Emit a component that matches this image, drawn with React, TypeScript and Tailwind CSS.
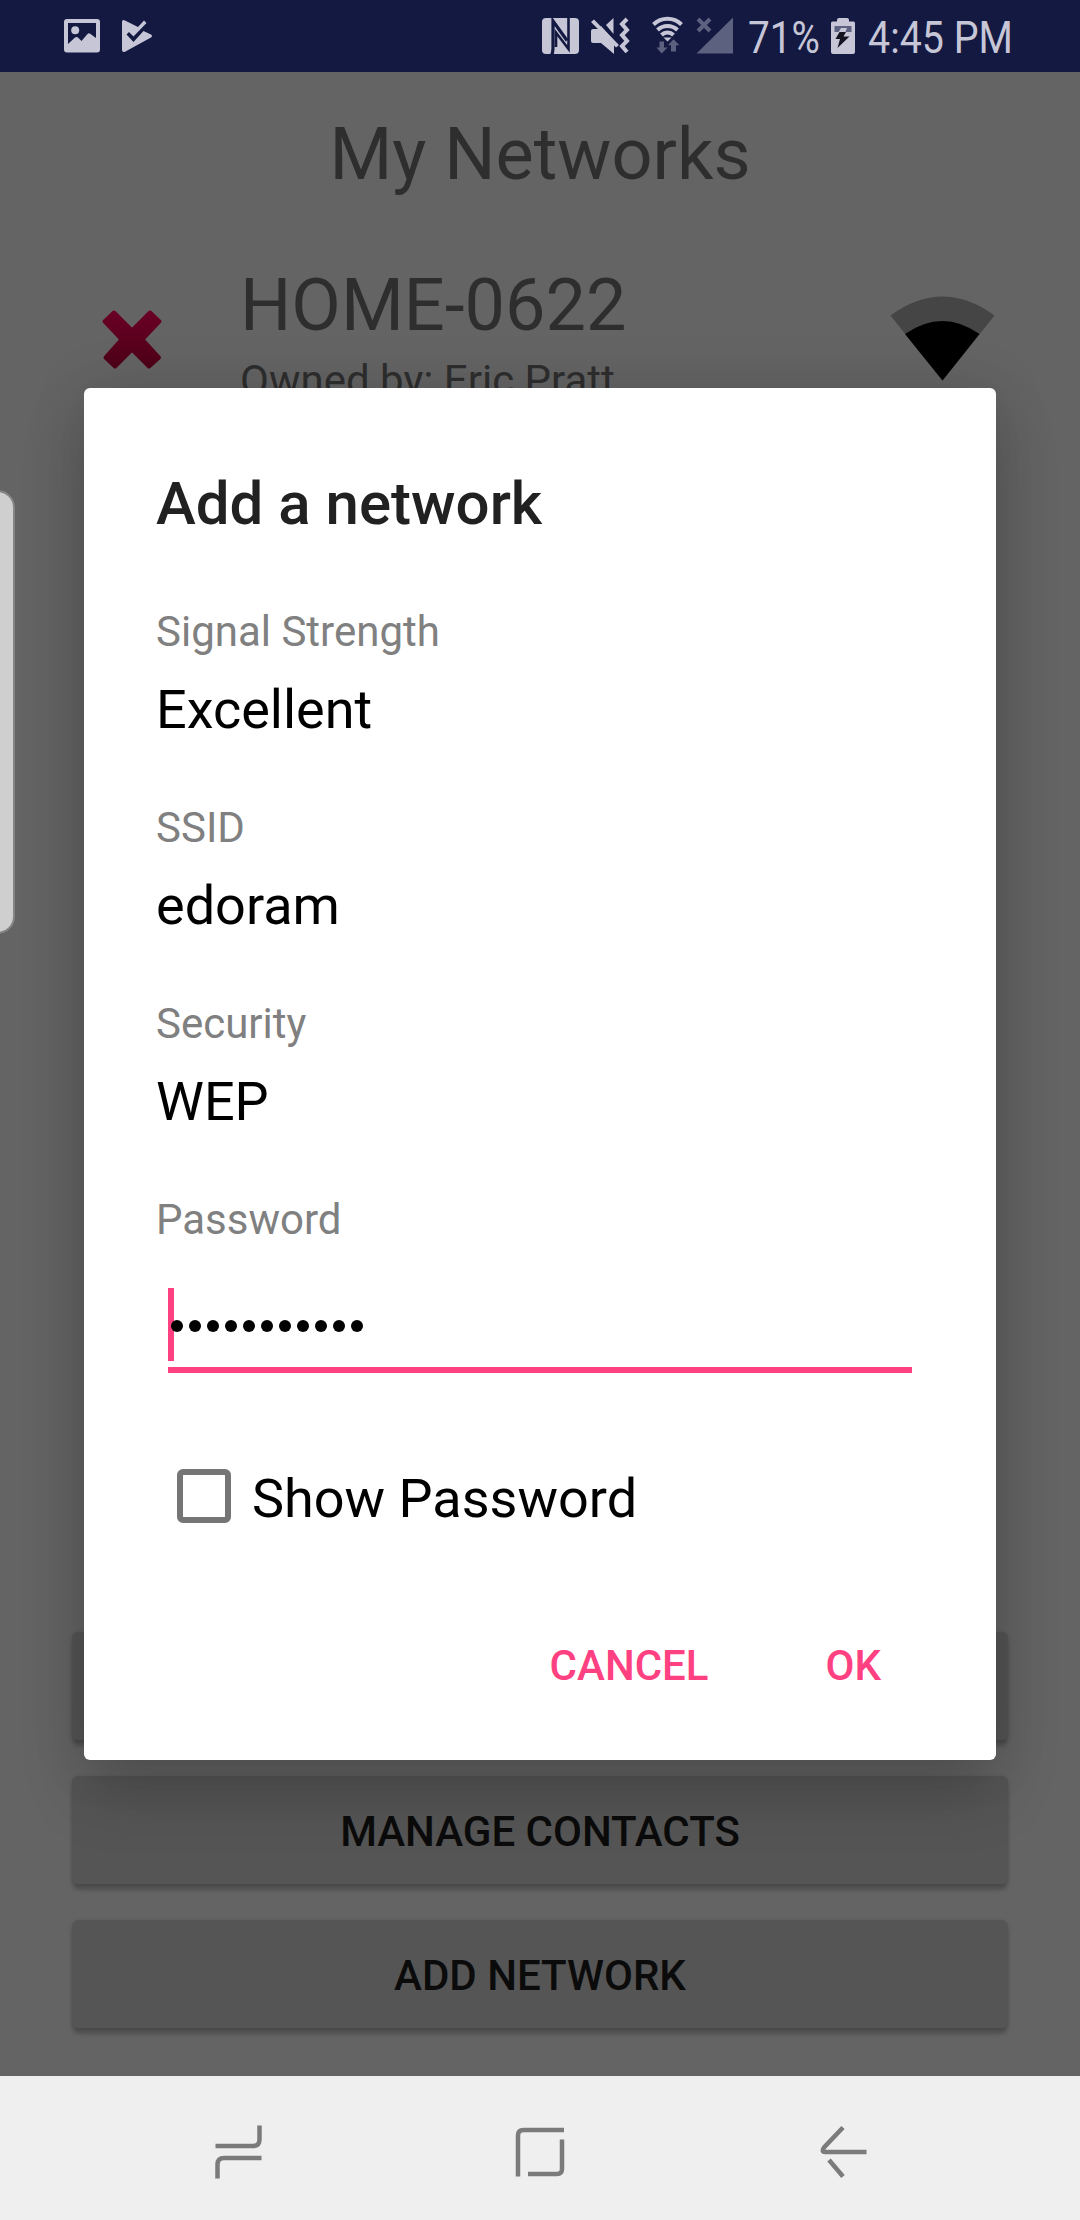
import React from "react";

const BAR = "#c6c6d6";
const DIM = "#5c617f";

function StatusBar() {
  return (
    <header className="flex h-[72px] shrink-0 items-center justify-between bg-[#141942]">
      <svg className="h-[72px] w-[200px]" viewBox="0 0 200 72">
        <path
          fill={BAR}
          fillRule="evenodd"
          d="M67 19h30a3 3 0 0 1 3 3v27.500a3 3 0 0 1-3 3H67a3 3 0 0 1-3-3V22a3 3 0 0 1 3-3ZM68 23v21l7-6.500q1.500-1 3 0l3.500 3.500 6-7q1.500-1.500 3 0l5.500 4V23Z"
        />
        <circle cx="75.200" cy="30.300" r="4" fill={BAR} />
        <path
          fill={BAR}
          d="M122 22q0-3 3-1.500l13 6.500 6-6.500 2.500 2.500-13 13.500-4.500-4.500-2.500 2.500 7 7.500 10-11 7.500 3.500q2 1.500 0 3l-26 14.200q-3 1-3-2Z"
        />
      </svg>
      <div className="flex items-center">
        <svg className="h-[72px] w-[216px]" viewBox="532 0 216 72">
          <rect x="542" y="18" width="37" height="36" rx="4" fill={BAR} />
          <g fill="none" stroke="#141942">
            <path d="M551.500 55q1.500-2 1.500-8V21L567 40.500" strokeWidth="3.200" />
            <path d="M568.500 17v32L556 32.500V47" strokeWidth="2.600" />
          </g>
          <g fill={BAR}>
            <path d="M591 31q0-2 2-2h5l3-3 13 14.500V54L601 43h-8q-2 0-2-2Z" />
            <path d="M606 25l7.500-7v16Z" />
            <path d="m594 19.500 25 25.500-3 2.500-25-25.500Z" />
          </g>
          <path d="M627 19l-5 5 5 6-5 5 5 6-5 5 5 6" fill="none" stroke={BAR} strokeWidth="4" />
          <g fill="none" stroke={BAR} strokeWidth="4">
            <path d="M653.500 24.500a20 20 0 0 1 28 0" />
            <path d="M657.500 30a14.500 14.500 0 0 1 20 0" />
            <path d="M661.500 35a8.500 8.500 0 0 1 12 0" />
          </g>
          <path d="M663.500 37.500h8l-4 4Z" fill={BAR} />
          <path fill={DIM} d="M659.500 41.500h4.500v6h3.500l-5.800 6-5.200-6h3ZM671 51.500h5v-6.200h3.500l-6-6-5.500 6h3ZM733 17.500v36h-36.500Z" />
          <path d="m698 19 12 12m0-12-12 12" stroke={DIM} strokeWidth="4" />
        </svg>
        <div className="w-[81px] pt-[4px] text-[45px] leading-[72px] text-[#c6c6d6]">
          <div className="origin-left scale-x-[0.86] whitespace-nowrap">71%</div>
        </div>
        <svg className="h-[72px] w-[28px]" viewBox="829 0 28 72">
          <path fill={BAR} d="M831 23q0-1.500 1.500-1.500H837V20q0-2 2-2h8q2 0 2 2v1.500h4.500q1.500 0 1.500 1.500v29q0 2-2 2h-20q-2 0-2-2Z" />
          <path fill={DIM} d="M834.500 26h17v6h-17Z" />
          <path fill={BAR} d="M841 28h6l-2 5h-7Z" />
          <path fill="#141420" d="m839.500 32h6.500l-2.500 4.500h6L837.500 48l2.500-9h-4.500Z" />
        </svg>
        <div className="ml-[11px] w-[212px] pt-[4px] text-[45px] leading-[72px] text-[#c6c6d6]">
          <div className="origin-left scale-x-[0.875] whitespace-nowrap">4:45 PM</div>
        </div>
      </div>
    </header>
  );
}

function NetworkRow() {
  return (
    <div className="flex h-[170px] items-start">
      <svg className="h-[170px] w-[240px]" viewBox="0 230 240 170">
        <defs>
          <linearGradient id="cross" x1="0" y1="0" x2="0" y2="1">
            <stop offset="0" stopColor="#690025" />
            <stop offset="1" stopColor="#4e0018" />
          </linearGradient>
        </defs>
        <path
          fill="url(#cross)"
          stroke="url(#cross)"
          strokeWidth="4"
          strokeLinejoin="round"
          d="m114 312.500 18 18 18-18 9.500 9-17 18 16.500 18-10 9-17-17-17 17-9.500-9 16-18-17-18Z"
        />
      </svg>
      <div className="flex grow flex-col text-[#2e2e2e]">
        <div className="mt-[34px] text-[72px] leading-[84px]">HOME-0622</div>
        <div className="mt-[8px] text-[42px] leading-[50px]">Owned by: Eric Pratt</div>
      </div>
      <svg className="h-[170px] w-[190px]" viewBox="890 230 190 170">
        <path fill="#454545" d="M890.500 315.500q52-38 104 0l-52 65Z" />
        <path fill="#000" d="M905 334q37.500-26 74.500 0l-37 46.500Z" />
      </svg>
    </div>
  );
}

function RaisedButton({ children }: { children?: React.ReactNode }) {
  return (
    <div className="flex h-[108px] items-center justify-center rounded-[6px] bg-[#555555] pt-[4px] text-[42px] font-medium leading-[50px] text-[#0b0b0b] shadow-[0_7px_4px_-1px_rgba(0,0,0,0.2),0_1px_4px_rgba(0,0,0,0.14)]">
      {children}
    </div>
  );
}

function Field({ label, value }: { label: string; value: string }) {
  return (
    <div className="h-[196px]">
      <div className="text-[42px] leading-[50px] text-[#808080]">{label}</div>
      <div className="mt-[21px] text-[54px] leading-[64px] text-black">{value}</div>
    </div>
  );
}

function AddNetworkDialog() {
  return (
    <section className="absolute left-[84px] top-[388px] flex h-[1372px] w-[912px] flex-col rounded-[6px] bg-white px-[72px] shadow-[0_32px_64px_rgba(0,0,0,0.19),0_0_60px_rgba(0,0,0,0.1)]">
      <h2 className="mt-[81px] text-[60px] font-medium leading-[70px] text-[#212121]">Add a network</h2>
      <div className="mt-[68px]">
        <Field label="Signal Strength" value="Excellent" />
        <Field label="SSID" value="edoram" />
        <Field label="Security" value="WEP" />
        <div className="text-[42px] leading-[50px] text-[#808080]">Password</div>
      </div>
      <div className="ml-[12px] mt-[43px] flex h-[85px] w-[744px] items-start border-b-[6px] border-[#ff4081]">
        <div className="h-[73px] w-[6px] bg-[#ff4081]" />
        <div className="-ml-[3px] mt-[32px] flex gap-[6px]">
          {Array.from({ length: 11 }, (_, i) => (
            <span key={i} className="h-[12px] w-[12px] rounded-full bg-black" />
          ))}
        </div>
      </div>
      <div className="ml-[21px] mt-[91px] flex h-[64px] items-center">
        <span className="h-[54px] w-[54px] rounded-[6px] border-[6px] border-[#757575]" />
        <span className="ml-[21px] mt-[6px] text-[54px] leading-[64px] text-black">Show Password</span>
      </div>
      <div className="mt-[113px] flex justify-end text-[42px] font-medium leading-[50px] text-[#ff4081]">
        <span>CANCEL</span>
        <span className="ml-[117px] mr-[43px]">OK</span>
      </div>
    </section>
  );
}

function NavigationBar() {
  return (
    <nav className="flex h-[144px] shrink-0 bg-[#efefef]">
      <svg className="h-[144px] w-full" viewBox="0 2076 1080 144" fill="none" stroke="#7b7b7b" strokeWidth="4.500">
        <path d="M259.500 2125.500v14q0 6.500-6.500 6.500h-37.500M217.500 2178.500v-14q0-6.500 6.500-6.500h37.500" />
        <path d="M518 2176.500v-41q0-5.500 5.500-5.500H564M562 2139.500v29.500q0 5-5 5h-29" />
        <path d="M843 2127.500l-19 20q-3 4.500 1 4.500h41.500M829 2160l14 16.500" />
      </svg>
    </nav>
  );
}

export default function App() {
  return (
    <div className="relative flex h-[2220px] w-[1080px] flex-col overflow-hidden bg-[#646464] font-[Roboto,sans-serif]">
      <StatusBar />
      <main className="relative flex grow flex-col">
        <h1 className="mt-[41px] text-center text-[72px] leading-[84px] text-[#2e2e2e]">My Networks</h1>
        <div className="mt-[33px]">
          <NetworkRow />
        </div>
        <div className="mb-[48px] mt-auto flex flex-col gap-[36px] px-[72px]">
          <RaisedButton />
          <RaisedButton>MANAGE CONTACTS</RaisedButton>
          <RaisedButton>ADD NETWORK</RaisedButton>
        </div>
      </main>
      <NavigationBar />
      <AddNetworkDialog />
      <div className="absolute -left-[20px] top-[490px] h-[444px] w-[35px] rounded-[18px] border-2 border-[#858585] bg-[#cfcfcf]" />
    </div>
  );
}
